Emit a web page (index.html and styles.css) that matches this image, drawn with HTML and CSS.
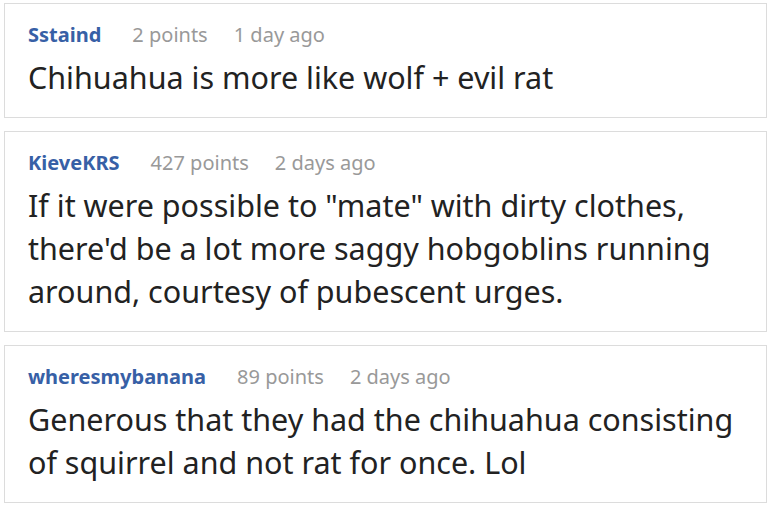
FILE: index.html
```html
<!DOCTYPE html>
<html>
<head>
<meta charset="utf-8">
<link rel="stylesheet" href="styles.css">
</head>
<body>
<div class="list">
  <div class="card">
    <div class="meta"><span class="user">Sstaind</span><span class="points">2 points</span><span class="time">1 day ago</span></div>
    <div class="text">Chihuahua is more like wolf + evil rat</div>
  </div>
  <div class="card">
    <div class="meta"><span class="user">KieveKRS</span><span class="points">427 points</span><span class="time">2 days ago</span></div>
    <div class="text">If it were possible to "mate" with dirty clothes, there'd be a lot more saggy hobgoblins running around, courtesy of pubescent urges.</div>
  </div>
  <div class="card">
    <div class="meta"><span class="user">wheresmybanana</span><span class="points">89 points</span><span class="time">2 days ago</span></div>
    <div class="text">Generous that they had the chihuahua consisting of squirrel and not rat for once. Lol</div>
  </div>
</div>
</body>
</html>
```
FILE: styles.css
```css
html, body {
  margin: 0;
  padding: 0;
  background: #fff;
}
body {
  font-family: "Noto Sans", "Open Sans", sans-serif;
}
.list {
  display: flex;
  flex-direction: column;
  gap: 13px;
  padding: 3px 5px 4px 4px;
  width: 763px;
}
.card {
  border: 1px solid #dcdcdc;
  background: #fff;
  padding: 13px 24px 18px 23px;
}
.meta {
  display: flex;
  align-items: center;
  height: 34px;
  font-size: 20px;
  margin-bottom: 5px;
}
.user {
  color: #3760a6;
  font-weight: 700;
}
.points {
  color: #999;
  margin-left: 31px;
}
.time {
  color: #999;
  margin-left: 26px;
}
.text {
  color: #222;
  font-size: 30.5px;
  line-height: 43px;
}
```
